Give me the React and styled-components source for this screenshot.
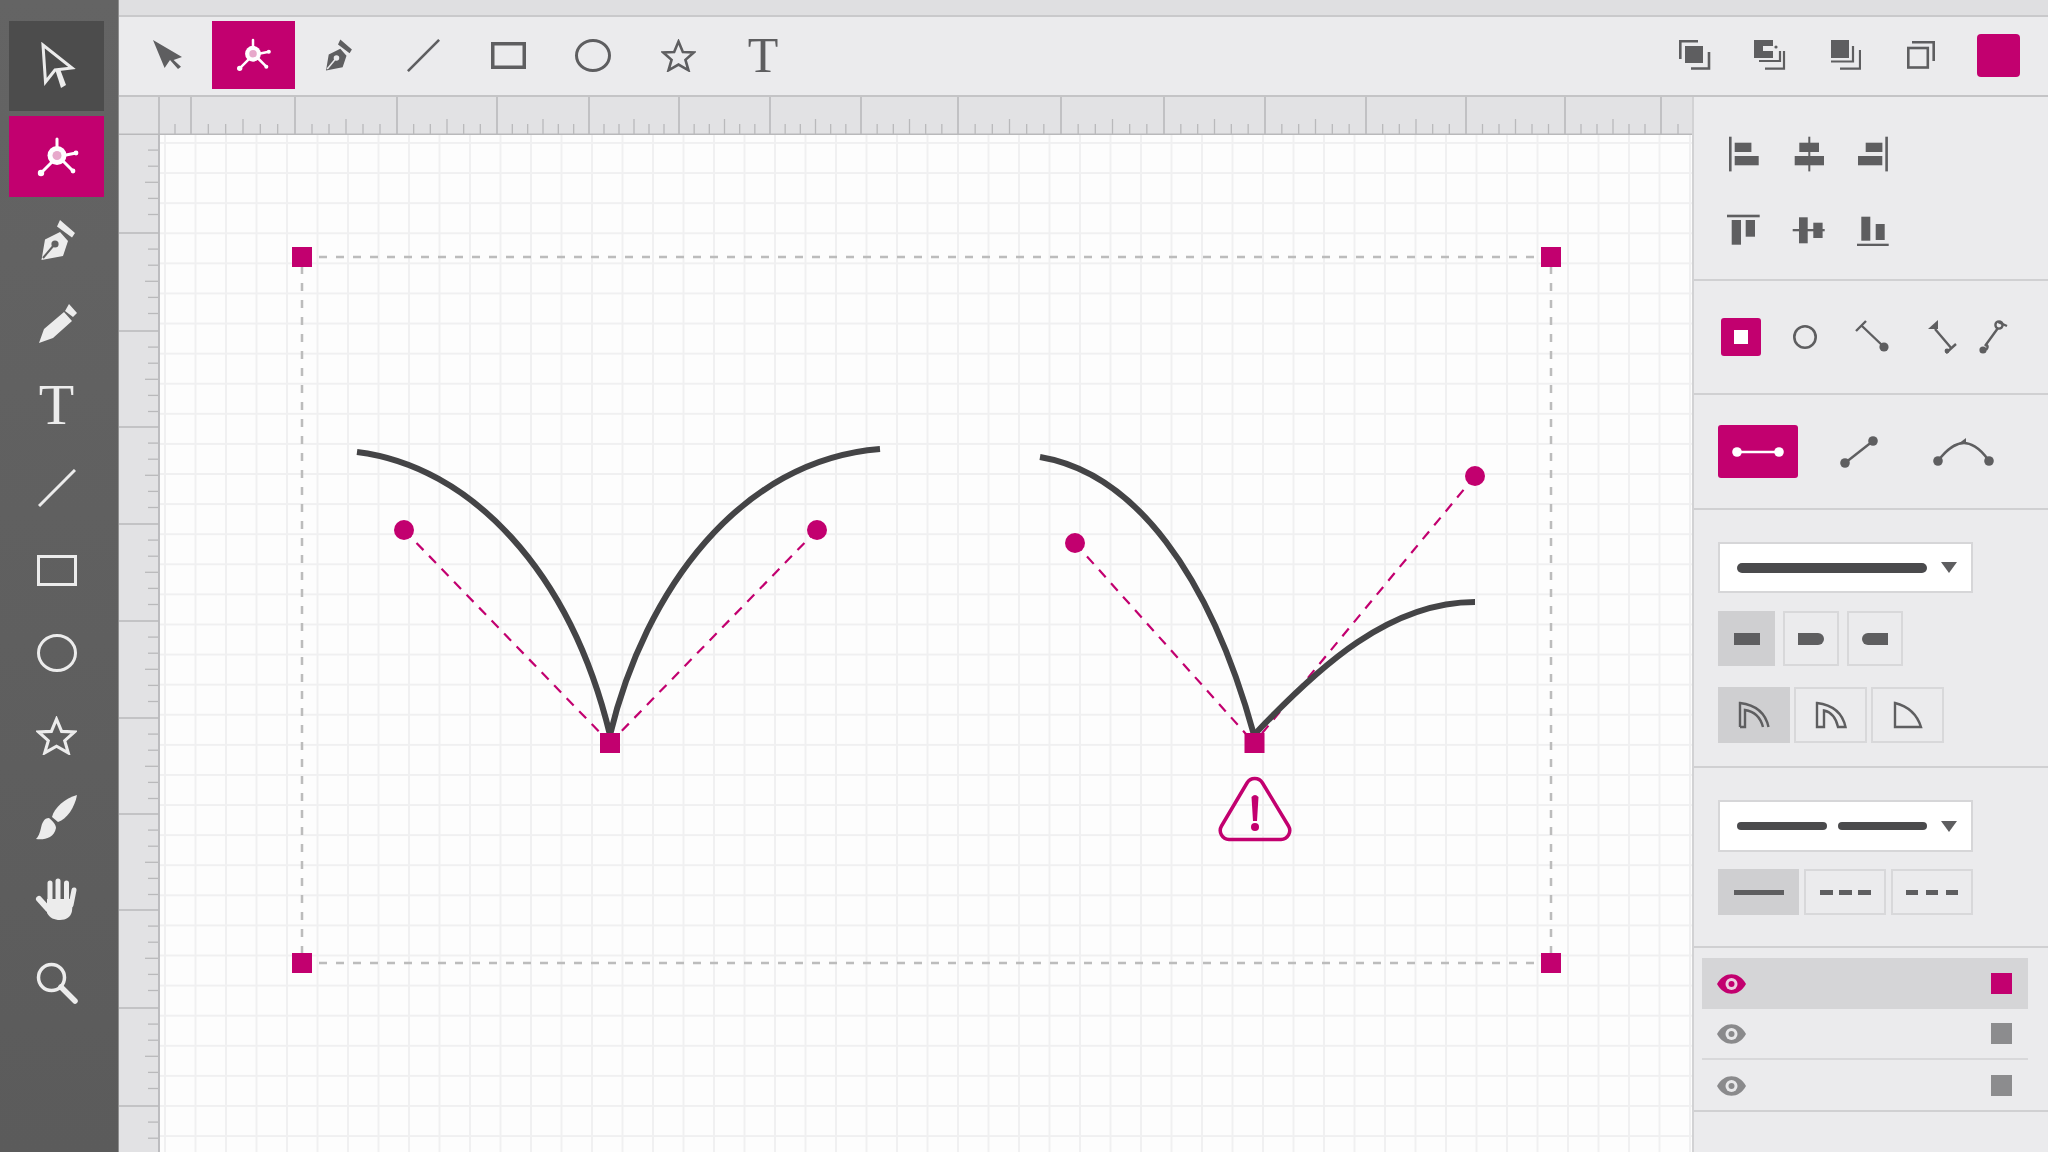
import React from 'react';
import styled, { createGlobalStyle } from 'styled-components';

const MAGENTA = '#c2006f';
const ICON_GRAY = '#5e5e60';

const GlobalStyle = createGlobalStyle`
  html, body {
    margin: 0;
    height: 100%;
    overflow: hidden;
    background: #ebebed;
    font-family: "Liberation Sans", Arial, sans-serif;
  }
  #root { height: 100%; }
`;

const Page = styled.div`
  display: flex;
  width: 100%;
  height: 100vh;
`;

/* left tool strip */
const Sidebar = styled.div`
  flex: 0 0 119px;
  box-sizing: border-box;
  padding: 21px 0 0 9px;
  background: linear-gradient(#646464, #5b5b5b);
  border-right: 1px solid #8e8e8e;
  color: #ececec;
`;

const SideButton = styled.div`
  display: flex;
  align-items: center;
  justify-content: center;
  width: 95px;
  height: ${({ $h }) => $h || 82.5}px;
  margin-top: ${({ $mt }) => $mt || 0}px;
  background: ${({ $bg }) => $bg || 'transparent'};
  color: ${({ $bg }) => ($bg === MAGENTA ? '#fff' : '#ececec')};
`;

const GlyphT = styled.span`
  font-family: "Liberation Serif", "Times New Roman", serif;
  font-size: ${({ $size }) => $size}px;
  line-height: 1;
  color: inherit;
`;

const Main = styled.div`
  flex: 1;
  display: flex;
  flex-direction: column;
  min-width: 0;
`;

const TopBand = styled.div`
  flex: 0 0 15px;
  background: #dfdfe1;
  border-bottom: 2px solid #c9c9cb;
`;

const Toolbar = styled.div`
  flex: 0 0 80px;
  box-sizing: border-box;
  display: flex;
  align-items: center;
  justify-content: space-between;
  padding: 0 28px 2px 7.5px;
  background: #ebebed;
  border-bottom: 2px solid #c4c4c6;
  color: ${ICON_GRAY};
`;

const ToolGroup = styled.div`
  display: flex;
  align-items: center;
  gap: ${({ $gap }) => $gap || 0}px;
`;

const ToolButton = styled.div`
  display: flex;
  align-items: center;
  justify-content: center;
  width: 83px;
  height: 68px;
  background: ${({ $active }) => ($active ? MAGENTA : 'transparent')};
  color: ${({ $active }) => ($active ? '#fff' : ICON_GRAY)};
`;

const ArrangeCell = styled.div`
  display: flex;
  align-items: center;
  justify-content: center;
  width: 75.5px;
  height: 44px;
`;

const ColorSwatch = styled.div`
  width: 43px;
  height: 43px;
  margin-left: 18px;
  border-radius: 4px;
  background: ${MAGENTA};
`;

const Body = styled.div`
  flex: 1;
  display: flex;
  min-height: 0;
`;

const Workspace = styled.div`
  flex: 1;
  display: grid;
  grid-template-columns: 41px 1fr;
  grid-template-rows: 38px 1fr;
  min-width: 0;
`;

const RulerTop = styled.svg`
  grid-column: 1 / 3;
  display: block;
  background: #e2e2e4;
`;

const RulerLeft = styled.svg`
  display: block;
  background: #e2e2e4;
`;

const Canvas = styled.div`
  position: relative;
  overflow: hidden;
  background-color: #fdfdfd;
  background-image:
    linear-gradient(to right, #f0f0f1 1.5px, transparent 1.5px),
    linear-gradient(to bottom, #f0f0f1 1.5px, transparent 1.5px);
  background-size: 30.5px 30.1px;
  background-position: 4px 7px;
`;

const CanvasArt = styled.svg`
  display: block;
  width: 100%;
  height: 100%;
`;

/* right property panel */
const Panel = styled.div`
  flex: 0 0 356px;
  box-sizing: border-box;
  background: #ebebed;
  border-left: 2px solid #d2d2d4;
  color: ${ICON_GRAY};
`;

const Section = styled.div`
  box-sizing: border-box;
  height: ${({ $h }) => $h}px;
  padding: ${({ $pad }) => $pad || '0'};
  border-bottom: 2px solid #d0d0d2;
`;

const AlignGrid = styled.div`
  display: grid;
  grid-template-columns: repeat(3, 64.5px);
  grid-auto-rows: 76px;
  place-items: center;
`;

const ShapeRow = styled.div`
  display: flex;
  align-items: center;
  height: 100%;
  gap: ${({ $gap }) => $gap || 0}px;
`;

const Spaced = styled.div`
  display: flex;
  margin-left: ${({ $ml }) => $ml || 0}px;
`;

const PrimaryButton = styled.div`
  display: flex;
  align-items: center;
  justify-content: center;
  width: ${({ $w }) => $w}px;
  height: ${({ $h }) => $h}px;
  border-radius: 3px;
  background: ${MAGENTA};
`;

const WhiteDot = styled.div`
  width: 14px;
  height: 14px;
  background: #fff;
`;

const SelectBox = styled.div`
  box-sizing: border-box;
  display: flex;
  align-items: center;
  justify-content: space-between;
  width: 255px;
  height: ${({ $h }) => $h}px;
  padding: 0 14px 0 17px;
  background: #fff;
  border: 2px solid #d6d6d8;
`;

const LinePreview = styled.div`
  display: flex;
  gap: 11px;
  width: 190px;
`;

const LineSegment = styled.div`
  flex: 1;
  height: ${({ $h }) => $h}px;
  border-radius: ${({ $h }) => $h / 2}px;
  background: #4a4a4c;
`;

const Caret = styled.div`
  width: 0;
  height: 0;
  border-left: 8px solid transparent;
  border-right: 8px solid transparent;
  border-top: 11px solid ${ICON_GRAY};
`;

const OptionRow = styled.div`
  display: flex;
  gap: ${({ $gap }) => $gap}px;
  margin-top: ${({ $mt }) => $mt}px;
`;

const OptionButton = styled.div`
  box-sizing: border-box;
  display: flex;
  align-items: center;
  justify-content: center;
  width: ${({ $w }) => $w}px;
  height: ${({ $h }) => $h}px;
  background: ${({ $on }) => ($on ? '#cfcfd1' : 'transparent')};
  border: 2px solid ${({ $on }) => ($on ? '#cfcfd1' : '#d8d8da')};
`;

const CapMark = styled.div`
  width: 26px;
  height: 12px;
  background: ${ICON_GRAY};
  border-radius: ${({ $r }) => $r || '0'};
`;

const DashMark = styled.div`
  display: flex;
  justify-content: space-between;
  width: ${({ $w }) => $w}px;
`;

const Dash = styled.div`
  width: ${({ $w }) => $w}px;
  height: 5px;
  background: ${ICON_GRAY};
`;

const LayerRow = styled.div`
  box-sizing: border-box;
  display: flex;
  align-items: center;
  justify-content: space-between;
  height: 51px;
  padding: 0 16px 0 15px;
  background: ${({ $on }) => ($on ? '#d5d5d7' : 'transparent')};
  border-bottom: ${({ $line }) => ($line ? '2px solid #d8d8da' : '0')};
`;

const LayerColor = styled.div`
  width: 21px;
  height: 21px;
  background: ${({ $on }) => ($on ? MAGENTA : '#8c8c8e')};
`;

/* icons: drawings, all currentColor unless noted */
const Cursor = () => (
  <svg width="44" height="48" viewBox="0 0 44 48">
    <path d="M8 3 L10.5 40 L20 28 L37 26 Z" fill="none" stroke="currentColor" strokeWidth="3" />
    <path d="M20 27 L25 27 L31 43 L26 46 Z" fill="currentColor" />
  </svg>
);

const CursorSolid = () => (
  <svg width="30" height="30" viewBox="0 0 30 30">
    <path d="M0 0 L29 17 L20.6 20 L28 26.7 L25 29 L17 20 L11.6 28 Z" fill="currentColor" />
  </svg>
);

const NodeTool = ({ size = 48, hole = '#e7a9cb' }) => (
  <svg width={size} height={size} viewBox="0 0 48 48">
    <g stroke="currentColor" strokeWidth="3" fill="none" strokeLinecap="round">
      <path d="M24 6 V20 M43 20 L28 23 M8 40 L20 28 M40 38 L29 27" />
    </g>
    <circle cx="24" cy="22.5" r="9.5" fill="currentColor" />
    <circle cx="24" cy="22.5" r="4.5" fill={hole} />
    <circle cx="8" cy="40" r="3.2" fill="currentColor" />
    <circle cx="43" cy="20" r="2.4" fill="currentColor" />
    <circle cx="40" cy="38" r="2.4" fill="currentColor" />
  </svg>
);

const PenNib = ({ size = 44, hole = '#606060' }) => (
  <svg width={size} height={size} viewBox="0 0 44 44">
    <path d="M6.5 42 L10 21.5 L25 14 L33 23 L28 38 Z M25 2 L40 15 L37 19.6 L22 8.5 Z" fill="currentColor" />
    <path d="M8 40 L19 27" stroke={hole} strokeWidth="2" />
    <circle cx="20" cy="26" r="3.6" fill={hole} />
  </svg>
);

const Pencil = () => (
  <svg width="44" height="44" viewBox="0 0 44 44">
    <path d="M4 42 L9 28 L29 11 L37 20 L18 37 Z M34 3 L42 12 L38 16 L30 10 Z" fill="currentColor" />
  </svg>
);

const Slash = ({ size, sw = 3 }) => (
  <svg width={size} height={size} viewBox="0 0 38 38">
    <path d="M1 37 L37 1" stroke="currentColor" strokeWidth={sw} fill="none" />
  </svg>
);

const RectShape = ({ w, h, sw = 3 }) => (
  <svg width={w} height={h} viewBox={`0 0 ${w} ${h}`}>
    <rect x={sw / 2} y={sw / 2} width={w - sw} height={h - sw} fill="none" stroke="currentColor" strokeWidth={sw} />
  </svg>
);

const EllipseShape = ({ w, h, sw = 3 }) => (
  <svg width={w} height={h} viewBox={`0 0 ${w} ${h}`}>
    <ellipse cx={w / 2} cy={h / 2} rx={w / 2 - sw / 2} ry={h / 2 - sw / 2} fill="none" stroke="currentColor" strokeWidth={sw} />
  </svg>
);

const Star = ({ w, h }) => (
  <svg width={w} height={h} viewBox="0 0 40 38">
    <path d="M20 3 L25 15 L37.5 15.5 L28 24 L31.5 36 L20 29.5 L8.5 36 L12 24 L2.5 15.5 L15 15 Z" fill="none" stroke="currentColor" strokeWidth="3" />
  </svg>
);

const Brush = () => (
  <svg width="44" height="46" viewBox="0 0 44 46">
    <path d="M42 0 C30 3 19 13 17 22 L23 27 C32 24 40 12 42 0 Z" fill="currentColor" />
    <path d="M14 23 C9 23 7 28 6 33 C5 38 3 42 1 44 C8 45 19 44 21 33 C21 30 18 26 14 23 Z" fill="currentColor" />
  </svg>
);

const Hand = () => (
  <svg width="44" height="46" viewBox="0 0 44 46">
    <g stroke="currentColor" strokeWidth="5" strokeLinecap="round" fill="none">
      <path d="M15 6 V26 M23 4 V26 M31.5 6 V26 M39 13 L36 28" />
      <path d="M4 22 L13 32" strokeWidth="6" />
    </g>
    <path d="M12 22 H38 L37 34 C36 40 31 43 25 43 C19 43 15 41 12 36 Z" fill="currentColor" />
  </svg>
);

const Search = () => (
  <svg width="44" height="44" viewBox="0 0 44 44">
    <circle cx="16.5" cy="16.5" r="13" fill="none" stroke="currentColor" strokeWidth="3.5" />
    <path d="M26 26 L40 40" stroke="currentColor" strokeWidth="5.5" strokeLinecap="round" />
  </svg>
);

const ArrangeFront = () => (
  <svg width="32" height="30" viewBox="0 0 32 30" fill="none" stroke="currentColor" strokeWidth="2.6">
    <path d="M1.3 19 V1.3 H19" />
    <rect x="6" y="6" width="18" height="17" fill="currentColor" stroke="none" />
    <path d="M12 28.5 H30 V12" />
  </svg>
);

const ArrangeForward = () => (
  <svg width="32" height="30" viewBox="0 0 32 30" fill="none" stroke="currentColor" strokeWidth="2.2">
    <path d="M5 21 H26 V11 M11 28.6 H30 V11" />
    <path d="M0 0 H19 V6 H9 V11 H19 V18 H0 Z" fill="currentColor" stroke="none" />
    <circle cx="22" cy="7" r="1.6" fill="currentColor" stroke="none" />
  </svg>
);

const ArrangeBackward = () => (
  <svg width="30" height="30" viewBox="0 0 30 30" fill="none" stroke="currentColor" strokeWidth="2.2">
    <rect x="0" y="0" width="18" height="18" fill="currentColor" stroke="none" />
    <path d="M0 21.5 H22 V6 M9 28.6 H29 V10" />
  </svg>
);

const ArrangeBack = () => (
  <svg width="28" height="28" viewBox="0 0 28 28" fill="none" stroke="currentColor" strokeWidth="2.6">
    <rect x="1.3" y="7" width="19.5" height="19.5" />
    <path d="M5 1.3 H26.7 V20" />
  </svg>
);

const alignIcons = [
  [[2, 0.7, 2.6, 34.7], [7.7, 6.7, 16.7, 9.3], [7.7, 20, 24, 9.3]],
  [[16.3, 0.7, 2, 34.7], [7.3, 6.7, 19.7, 9.3], [2.7, 20, 29.3, 9.3]],
  [[29.3, 0.7, 2.6, 34.7], [9.7, 6.7, 16.7, 9.3], [2, 20, 24.3, 9.3]],
  [[0, 2.7, 32.7, 2.6], [4.7, 8, 9.3, 24.7], [18.7, 8, 9.3, 16.7]],
  [[0.7, 17, 32, 2.3], [7, 5.3, 8.7, 26], [21.3, 10.7, 9.3, 15.3]],
  [[1, 31.7, 31.7, 2.3], [5.3, 4.7, 9, 24], [19.7, 12, 9, 16]],
];

const AlignIcon = ({ rects }) => (
  <svg width="34" height="36" viewBox="0 0 34 36">
    {rects.map((r, i) => (
      <rect key={i} x={r[0]} y={r[1]} width={r[2]} height={r[3]} fill="currentColor" />
    ))}
  </svg>
);

const EndBar = () => (
  <svg width="34" height="34" viewBox="0 0 34 34" fill="none" stroke="currentColor" strokeWidth="2.4">
    <path d="M1 11 L11 1 M7 6 L29 27" />
    <circle cx="29" cy="27" r="4.6" fill="currentColor" stroke="none" />
  </svg>
);

const EndTriangle = () => (
  <svg width="30" height="36" viewBox="0 0 30 36" fill="none" stroke="currentColor" strokeWidth="2.4">
    <path d="M8 10 L25 30 M19 34 L29 25" />
    <path d="M1 10 L11 1 V10 Z" fill="currentColor" stroke="none" />
    <circle cx="20" cy="32" r="2.4" fill="currentColor" stroke="none" />
  </svg>
);

const EndRing = () => (
  <svg width="30" height="36" viewBox="0 0 30 36" fill="none" stroke="currentColor" strokeWidth="2.4">
    <path d="M20 9 L7 27 M20 3 L29 7" />
    <circle cx="21" cy="6" r="3.6" />
    <circle cx="5" cy="31" r="3.6" fill="currentColor" stroke="none" />
    <path d="M8 26 C11 27 9 30 8 31" />
  </svg>
);

const CornerDots = ({ active }) => (
  <svg width="52" height="16" viewBox="0 0 52 16">
    <path d="M5 8 H47" stroke={active ? '#fff' : ICON_GRAY} strokeWidth="2.6" />
    <circle cx="5" cy="8" r="4.8" fill="#fff" />
    <circle cx="47" cy="8" r="4.8" fill="#fff" />
  </svg>
);

const LineDots = () => (
  <svg width="38" height="32" viewBox="0 0 38 32" fill="none">
    <path d="M5 27 L33 5" stroke="currentColor" strokeWidth="2.4" />
    <circle cx="5" cy="27" r="4.8" fill="currentColor" />
    <circle cx="33" cy="5" r="4.8" fill="currentColor" />
  </svg>
);

const CurveDots = () => (
  <svg width="61" height="28" viewBox="0 0 61 28" fill="none">
    <path d="M5 23 C16 8 26 5 31 5 C36 5 46 8 56 23" stroke="currentColor" strokeWidth="2.4" />
    <circle cx="5" cy="23" r="4.8" fill="currentColor" />
    <circle cx="56" cy="23" r="4.8" fill="currentColor" />
    <path d="M25 6 L33 0 V6 Z" fill="currentColor" />
  </svg>
);

const JoinRound = () => (
  <svg width="32" height="30" viewBox="0 0 32 30" fill="none" stroke="currentColor" strokeWidth="2.4">
    <path d="M2 27 V3 Q26 6 30.5 27" />
    <path d="M2 27 H7 V10 Q21 12 25 27" />
  </svg>
);

const JoinBand = () => (
  <svg width="32" height="30" viewBox="0 0 32 30" fill="none" stroke="currentColor" strokeWidth="2.4">
    <path d="M2 27 V3 Q26 6 30.5 27 H23 Q20 13 9 10.5 V27 Z" />
  </svg>
);

const JoinWedge = () => (
  <svg width="30" height="30" viewBox="0 0 30 30" fill="none" stroke="currentColor" strokeWidth="2.4">
    <path d="M2 27 V3 Q22 8 28 27 Z" />
  </svg>
);

const Eye = ({ color, ring }) => (
  <svg width="29" height="20" viewBox="0 0 29 20">
    <path d="M0 10 C7 -3 22 -3 29 10 C22 23 7 23 0 10 Z" fill={color} />
    <circle cx="14.5" cy="10" r="6" fill={ring} />
    <circle cx="14.5" cy="10" r="3" fill={color} />
  </svg>
);

/* ruler tick positions, read off the screen */
const hMajors = [159, 191, 295, 397, 497, 589, 679, 770, 861, 958, 1061, 1164, 1265, 1366, 1466, 1565, 1661];
const vMajors = [134, 233, 331, 427, 524, 621, 718, 814, 910, 1008, 1106];

const TopRuler = () => (
  <RulerTop width="1573" height="38" viewBox="119 97 1573 38">
    <g stroke="#b9b9bb">
      {hMajors.map((x) => (
        <line key={x} x1={x} x2={x} y1="97" y2="134" strokeWidth="1.6" />
      ))}
      {hMajors.slice(1, -1).map((x, i) =>
        [1, 2, 3, 4, 5].map((k) => {
          const tx = x + ((hMajors[i + 2] - x) * k) / 6;
          return <line key={`${x}-${k}`} x1={tx} x2={tx} y1={k === 3 ? 119 : 124} y2="134" strokeWidth="1.3" />;
        })
      )}
      <line x1="175" x2="175" y1="124" y2="134" strokeWidth="1.3" />
      <line x1="1678" x2="1678" y1="124" y2="134" strokeWidth="1.3" />
      <line x1="119" x2="1692" y1="134.2" y2="134.2" strokeWidth="1.6" />
    </g>
  </RulerTop>
);

const LeftRuler = () => (
  <RulerLeft width="41" height="1017" viewBox="119 135 41 1017">
    <g stroke="#b9b9bb">
      {vMajors.map((y) => (
        <line key={y} x1="119" x2="159" y1={y} y2={y} strokeWidth="1.6" />
      ))}
      {vMajors.map((y) =>
        [1, 2, 3, 4, 5].map((k) => {
          const ty = y + k * 16.1;
          return <line key={`${y}-${k}`} x1={k === 3 ? 145 : 148} x2="158" y1={ty} y2={ty} strokeWidth="1.3" />;
        })
      )}
      <line x1="159" x2="159" y1="135" y2="1152" strokeWidth="1.8" />
    </g>
  </RulerLeft>
);

const handleCorners = [[302, 257], [1551, 257], [302, 963], [1551, 963]];
const nodes = [[610, 743], [1254.5, 743]];
const ctrlPoints = [[404, 530], [817, 530], [1075, 543], [1475, 476]];

const Drawing = () => (
  <CanvasArt viewBox="160 135 1532 1017">
    <rect x="302" y="257" width="1249" height="706" fill="none" stroke="#bcbcbc" strokeWidth="2.5" strokeDasharray="8 9" />
    <g stroke={MAGENTA} strokeWidth="2.2" strokeDasharray="10 8" fill="none">
      <path d="M404 530 L610 743" />
      <path d="M817 530 L610 743" />
      <path d="M1075 543 L1254 743" />
      <path d="M1475 476 L1254 743" />
    </g>
    <g stroke="#444446" strokeWidth="6" fill="none">
      <path d="M357 452 C470 466 570 570 610 735" />
      <path d="M610 735 C645 590 740 460 880 449" />
      <path d="M1040 457 C1135 473 1210 575 1254 735" />
      <path d="M1254 735 C1320 665 1390 602 1475 602" />
    </g>
    {handleCorners.concat(nodes).map(([x, y]) => (
      <rect key={`${x}-${y}`} x={x - 10} y={y - 10} width="20" height="20" fill={MAGENTA} />
    ))}
    {ctrlPoints.map(([x, y]) => (
      <circle key={`${x}-${y}`} cx={x} cy={y} r="10" fill={MAGENTA} />
    ))}
    <path d="M1247 783 a9 9 0 0 1 15.5 0 L1288.5 826 a9 9 0 0 1 -7.5 13.5 H1229 a9 9 0 0 1 -7.5 -13.5 Z" fill="none" stroke={MAGENTA} strokeWidth="3.5" />
    <path d="M1251.5 797 Q1255 793 1258.5 797 L1257 821 H1253 Z" fill={MAGENTA} />
    <circle cx="1255" cy="827" r="4" fill={MAGENTA} />
  </CanvasArt>
);

const App = () => (
  <Page>
    <GlobalStyle />
    <Sidebar>
      <SideButton $h={90} $bg="#4c4c4c"><Cursor /></SideButton>
      <SideButton $h={81} $mt={5} $bg={MAGENTA}><NodeTool /></SideButton>
      <SideButton $mt={2}><PenNib /></SideButton>
      <SideButton><Pencil /></SideButton>
      <SideButton><GlyphT $size={58}>T</GlyphT></SideButton>
      <SideButton><Slash size={38} /></SideButton>
      <SideButton><RectShape w={40} h={31} /></SideButton>
      <SideButton><EllipseShape w={40} h={38} /></SideButton>
      <SideButton><Star w={41} h={39} /></SideButton>
      <SideButton><Brush /></SideButton>
      <SideButton><Hand /></SideButton>
      <SideButton><Search /></SideButton>
    </Sidebar>

    <Main>
      <TopBand />
      <Toolbar>
        <ToolGroup $gap={2}>
          <ToolButton><CursorSolid /></ToolButton>
          <ToolButton $active><NodeTool size={40} hole="#e7a9cb" /></ToolButton>
          <ToolButton><PenNib size={34} hole="#ebebed" /></ToolButton>
          <ToolButton><Slash size={33} /></ToolButton>
          <ToolButton><RectShape w={35} h={27} sw={3.5} /></ToolButton>
          <ToolButton><EllipseShape w={36} h={33} /></ToolButton>
          <ToolButton><Star w={35} h={33} /></ToolButton>
          <ToolButton><GlyphT $size={50}>T</GlyphT></ToolButton>
        </ToolGroup>
        <ToolGroup>
          <ArrangeCell><ArrangeFront /></ArrangeCell>
          <ArrangeCell><ArrangeForward /></ArrangeCell>
          <ArrangeCell><ArrangeBackward /></ArrangeCell>
          <ArrangeCell><ArrangeBack /></ArrangeCell>
          <ColorSwatch />
        </ToolGroup>
      </Toolbar>

      <Body>
        <Workspace>
          <TopRuler />
          <LeftRuler />
          <Canvas>
            <Drawing />
          </Canvas>
        </Workspace>

        <Panel>
          <Section $h={184} $pad="19px 0 0 18px">
            <AlignGrid>
              {alignIcons.map((rects, i) => (
                <AlignIcon key={i} rects={rects} />
              ))}
            </AlignGrid>
          </Section>

          <Section $h={114} $pad="0 0 0 27px">
            <ShapeRow>
              <PrimaryButton $w={40} $h={38}><WhiteDot /></PrimaryButton>
              <Spaced $ml={32}><EllipseShape w={24} h={24} sw={2.6} /></Spaced>
              <Spaced $ml={38}><EndBar /></Spaced>
              <Spaced $ml={38}><EndTriangle /></Spaced>
              <Spaced $ml={21}><EndRing /></Spaced>
            </ShapeRow>
          </Section>

          <Section $h={115} $pad="0 0 0 24px">
            <ShapeRow>
              <PrimaryButton $w={80} $h={53}><CornerDots active /></PrimaryButton>
              <Spaced $ml={42}><LineDots /></Spaced>
              <Spaced $ml={55}><CurveDots /></Spaced>
            </ShapeRow>
          </Section>

          <Section $h={258} $pad="32px 0 0 24px">
            <SelectBox $h={51}>
              <LinePreview><LineSegment $h={10} /></LinePreview>
              <Caret />
            </SelectBox>
            <OptionRow $gap={8} $mt={18}>
              <OptionButton $on $w={57} $h={55}><CapMark /></OptionButton>
              <OptionButton $w={56} $h={55}><CapMark $r="0 6px 6px 0" /></OptionButton>
              <OptionButton $w={56} $h={55}><CapMark $r="6px 0 0 6px" /></OptionButton>
            </OptionRow>
            <OptionRow $gap={4} $mt={21}>
              <OptionButton $on $w={72} $h={56}><JoinRound /></OptionButton>
              <OptionButton $w={73} $h={56}><JoinBand /></OptionButton>
              <OptionButton $w={73} $h={56}><JoinWedge /></OptionButton>
            </OptionRow>
          </Section>

          <Section $h={180} $pad="32px 0 0 24px">
            <SelectBox $h={52}>
              <LinePreview>
                <LineSegment $h={8} />
                <LineSegment $h={8} />
              </LinePreview>
              <Caret />
            </SelectBox>
            <OptionRow $gap={5} $mt={17}>
              <OptionButton $on $w={81} $h={46}><Dash $w={50} /></OptionButton>
              <OptionButton $w={82} $h={46}>
                <DashMark $w={51}><Dash $w={13} /><Dash $w={13} /><Dash $w={13} /></DashMark>
              </OptionButton>
              <OptionButton $w={82} $h={46}>
                <DashMark $w={52}><Dash $w={12} /><Dash $w={12} /><Dash $w={12} /></DashMark>
              </OptionButton>
            </OptionRow>
          </Section>

          <Section $h={164} $pad="10px 20px 0 8px">
            <LayerRow $on>
              <Eye color={MAGENTA} ring="#eccfe0" />
              <LayerColor $on />
            </LayerRow>
            <LayerRow $line>
              <Eye color="#8a8a8c" ring="#e8e8ea" />
              <LayerColor />
            </LayerRow>
            <LayerRow>
              <Eye color="#8a8a8c" ring="#e8e8ea" />
              <LayerColor />
            </LayerRow>
          </Section>
        </Panel>
      </Body>
    </Main>
  </Page>
);

export default App;
